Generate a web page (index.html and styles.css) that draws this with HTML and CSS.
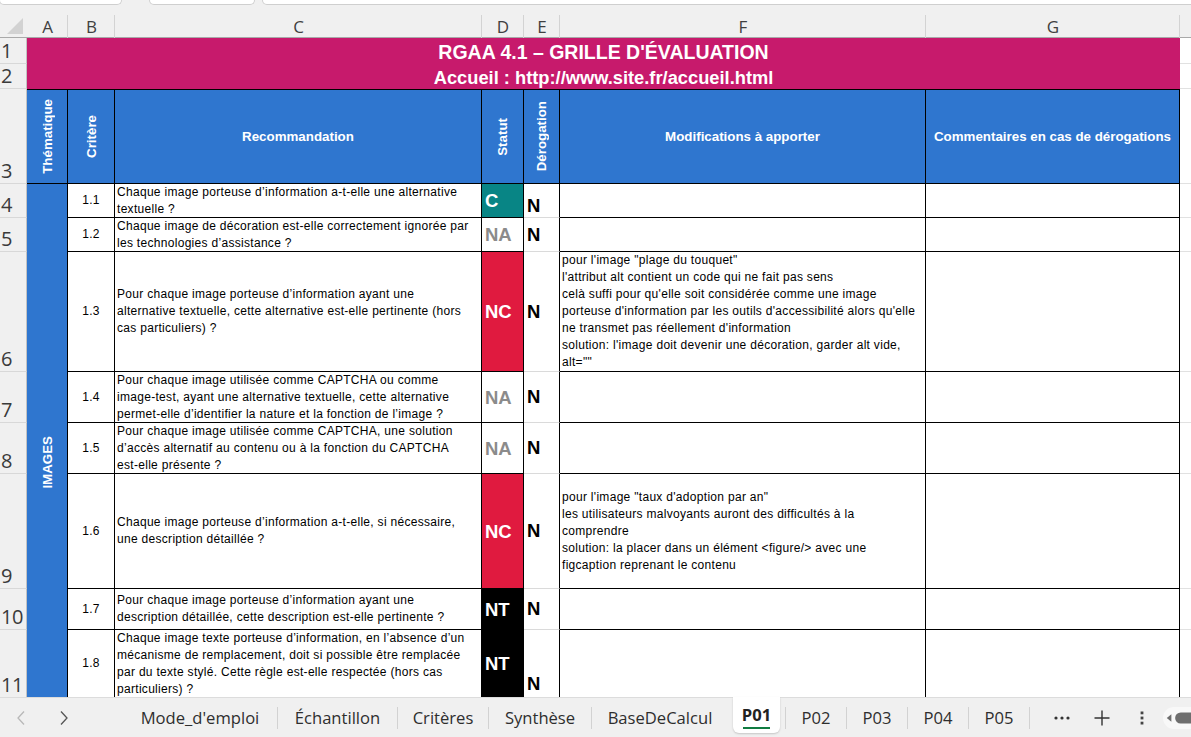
FILE: index.html
```html
<!DOCTYPE html>
<html lang="fr">
<head>
<meta charset="utf-8">
<title>RGAA 4.1 – Grille d'évaluation</title>
<link rel="stylesheet" href="styles.css">
</head>
<body>
<div class="topstrip">
  <div class="tb tb1"></div>
  <div class="tb tb2"></div>
  <div class="tb tb3"></div>
</div>
<div class="colhead">
  <div class="corner"><svg width="27" height="33" viewBox="0 0 27 33"><polygon points="23,13 23,29 7,29" fill="#d2d2d2"/></svg></div>
  <div class="ch">A</div>
  <div class="ch">B</div>
  <div class="ch">C</div>
  <div class="ch">D</div>
  <div class="ch">E</div>
  <div class="ch">F</div>
  <div class="ch">G</div>
  <div class="ch ch-end"></div>
</div>
<div class="sheet">
  <div class="title">
    <div class="t1">RGAA 4.1 – GRILLE D'ÉVALUATION</div>
    <div class="t2">Accueil : http://www.site.fr/accueil.html</div>
  </div>
  <div class="theme-cell"><span class="vtext">IMAGES</span></div>

  <div class="rh">1</div><div class="gap"></div>
  <div class="rh">2</div><div class="gap"></div>

  <div class="rh">3</div>
  <div class="th thA"><span class="vtext">Thématique</span></div>
  <div class="th"><span class="vtext">Critère</span></div>
  <div class="th">Recommandation</div>
  <div class="th"><span class="vtext">Statut</span></div>
  <div class="th"><span class="vtext">Dérogation</span></div>
  <div class="th">Modifications à apporter</div>
  <div class="th">Commentaires en cas de dérogations</div>
  <div class="gap"></div>

  <div class="rh">4</div>
  <div class="td num">1.1</div>
  <div class="td txt">Chaque image porteuse d’information a-t-elle une alternative<br>textuelle ?</div>
  <div class="td st st-c">C</div>
  <div class="td der der-low">N</div>
  <div class="td txt"></div>
  <div class="td"></div>
  <div class="gap"></div>

  <div class="rh">5</div>
  <div class="td num">1.2</div>
  <div class="td txt">Chaque image de décoration est-elle correctement ignorée par<br>les technologies d’assistance ?</div>
  <div class="td st st-na">NA</div>
  <div class="td der">N</div>
  <div class="td txt"></div>
  <div class="td"></div>
  <div class="gap"></div>

  <div class="rh">6</div>
  <div class="td num">1.3</div>
  <div class="td txt">Pour chaque image porteuse d’information ayant une<br>alternative textuelle, cette alternative est-elle pertinente (hors<br>cas particuliers) ?</div>
  <div class="td st st-nc">NC</div>
  <div class="td der">N</div>
  <div class="td txt">pour l'image "plage du touquet"<br>l'attribut alt contient un code qui ne fait pas sens<br>celà suffi pour qu'elle soit considérée comme une image<br>porteuse d'information par les outils d'accessibilité alors qu'elle<br>ne transmet pas réellement d'information<br>solution: l'image doit devenir une décoration, garder alt vide,<br>alt=""</div>
  <div class="td"></div>
  <div class="gap"></div>

  <div class="rh">7</div>
  <div class="td num">1.4</div>
  <div class="td txt">Pour chaque image utilisée comme CAPTCHA ou comme<br>image-test, ayant une alternative textuelle, cette alternative<br>permet-elle d’identifier la nature et la fonction de l’image ?</div>
  <div class="td st st-na">NA</div>
  <div class="td der">N</div>
  <div class="td txt"></div>
  <div class="td"></div>
  <div class="gap"></div>

  <div class="rh">8</div>
  <div class="td num">1.5</div>
  <div class="td txt">Pour chaque image utilisée comme CAPTCHA, une solution<br>d’accès alternatif au contenu ou à la fonction du CAPTCHA<br>est-elle présente ?</div>
  <div class="td st st-na">NA</div>
  <div class="td der">N</div>
  <div class="td txt"></div>
  <div class="td"></div>
  <div class="gap"></div>

  <div class="rh">9</div>
  <div class="td num">1.6</div>
  <div class="td txt">Chaque image porteuse d’information a-t-elle, si nécessaire,<br>une description détaillée ?</div>
  <div class="td st st-nc">NC</div>
  <div class="td der">N</div>
  <div class="td txt">pour l'image "taux d'adoption par an"<br>les utilisateurs malvoyants auront des difficultés à la<br>comprendre<br>solution: la placer dans un élément &lt;figure/&gt; avec une<br>figcaption reprenant le contenu</div>
  <div class="td"></div>
  <div class="gap"></div>

  <div class="rh">10</div>
  <div class="td num">1.7</div>
  <div class="td txt">Pour chaque image porteuse d’information ayant une<br>description détaillée, cette description est-elle pertinente ?</div>
  <div class="td st st-nt">NT</div>
  <div class="td der">N</div>
  <div class="td txt"></div>
  <div class="td"></div>
  <div class="gap"></div>

  <div class="rh">11</div>
  <div class="td num">1.8</div>
  <div class="td txt">Chaque image texte porteuse d’information, en l’absence d’un<br>mécanisme de remplacement, doit si possible être remplacée<br>par du texte stylé. Cette règle est-elle respectée (hors cas<br>particuliers) ?</div>
  <div class="td st st-nt">NT</div>
  <div class="td der der-bottom">N</div>
  <div class="td txt"></div>
  <div class="td"></div>
  <div class="gap"></div>
</div>
<div class="tabbar">
  <div class="nav">
    <svg class="chev" width="10" height="16" viewBox="0 0 10 16"><polyline points="8,1.5 2,8 8,14.5" fill="none" stroke="#b8b8b8" stroke-width="1.3"/></svg>
    <svg class="chev" width="10" height="16" viewBox="0 0 10 16"><polyline points="2,1.5 8,8 2,14.5" fill="none" stroke="#555" stroke-width="1.3"/></svg>
  </div>
  <div class="tabs">
    <span class="tab w-mode">Mode_d'emploi</span><span class="sep"></span>
    <span class="tab w-ech">Échantillon</span><span class="sep"></span>
    <span class="tab w-crit">Critères</span><span class="sep"></span>
    <span class="tab w-syn">Synthèse</span><span class="sep"></span>
    <span class="tab w-base">BaseDeCalcul</span>
    <span class="tab active">P01</span><span class="sep"></span>
    <span class="tab w-p">P02</span><span class="sep"></span>
    <span class="tab w-p">P03</span><span class="sep"></span>
    <span class="tab w-p">P04</span><span class="sep"></span>
    <span class="tab w-p">P05</span><span class="sep"></span>
  </div>
  <div class="tools">
    <span class="tool"><svg width="16" height="4" viewBox="0 0 16 4"><circle cx="2" cy="2" r="1.6" fill="#333"/><circle cx="8" cy="2" r="1.6" fill="#333"/><circle cx="14" cy="2" r="1.6" fill="#333"/></svg></span>
    <span class="tool"><svg width="16" height="16" viewBox="0 0 16 16"><path d="M8 0.5V15.5M0.5 8H15.5" stroke="#333" stroke-width="1.4"/></svg></span>
    <span class="tool"><svg width="4" height="14" viewBox="0 0 4 14"><rect x="0.6" y="0.5" width="2.8" height="2.8" fill="#444"/><rect x="0.6" y="5.6" width="2.8" height="2.8" fill="#444"/><rect x="0.6" y="10.7" width="2.8" height="2.8" fill="#444"/></svg></span>
    <span class="scroll"><svg width="30" height="18" viewBox="0 0 30 18"><polygon points="4,9 9,5 9,13" fill="#6e6e6e"/><rect x="13" y="3" width="30" height="12" rx="6" fill="#6e6e6e"/></svg></span>
  </div>
</div>
</body>
</html>
```

FILE: styles.css
```css
* { box-sizing: border-box; margin: 0; padding: 0; }
html, body { width: 1191px; height: 737px; overflow: hidden; }
body {
  background: #fff;
  font-family: "Liberation Sans", Arial, sans-serif;
  display: flex;
  flex-direction: column;
  --cols: 27px 41px 47px 367px 42px 36px 366px 254px 11px;
}

/* top strip */
.topstrip { height: 5px; flex: none; background: #f0f0f0; display: flex; }
.tb { height: 5px; background: #fff; border: 1px solid #cfcfcf; border-top: none; border-radius: 0 0 5px 5px; }
.tb1 { width: 123px; margin-left: -1px; }
.tb2 { width: 106px; margin-left: 27px; }
.tb3 { flex: 1; margin-left: 7px; margin-right: -6px; }

/* column header */
.colhead {
  height: 33px; flex: none;
  display: grid; grid-template-columns: var(--cols);
  background: #f0f0f0; border-bottom: 1px solid #a9a9a9;
}
.corner { display: flex; }
.ch {
  display: flex; align-items: center; justify-content: center;
  padding-top: 10px;
  font-family: "Open Sans", "Noto Sans", sans-serif; font-size: 17px; color: #404040;
  background: linear-gradient(#d3d3d3, #d3d3d3) no-repeat right bottom / 1px 23px;
}
.ch-end { background: none; }

/* sheet grid */
.sheet {
  flex: 1; overflow: hidden;
  display: grid;
  grid-template-columns: var(--cols);
  grid-template-rows: 26px 25px 95px 34px 34px 120px 51px 51px 115px 41px 68px;
  align-content: start;
  font-size: 12px; color: #000;
}
.rh {
  grid-column: 1;
  background: #f0f0f0;
  border-bottom: 1px solid #d8d8d8;
  border-right: 1px solid #c2c2c2;
  display: flex; align-items: flex-end;
  padding: 0 0 2px 1px;
  font-family: "Open Sans", "Noto Sans", sans-serif; font-size: 20px; line-height: 20px; color: #3a3a3a;
  letter-spacing: -0.5px;
}
.gap { grid-column: 9; border-bottom: 1px solid #e1e1e1; background: #fff; }

.title {
  grid-column: 2 / 9; grid-row: 1 / 3;
  background: #c71a6c; color: #fff; font-weight: bold;
  display: flex; flex-direction: column; align-items: center;
}
.t1 { height: 26px; line-height: 26px; font-size: 19.5px; padding-top: 1px; }
.t2 { height: 25px; line-height: 25px; font-size: 18.3px; padding-top: 1px; }

.th {
  background: #2f76cf; color: #fff; font-weight: bold; font-size: 13.33px;
  border-top: 1px solid #000; border-right: 1px solid #000; border-bottom: 1px solid #000;
  display: flex; align-items: center; justify-content: center; text-align: center;
}
.vtext { writing-mode: vertical-rl; transform: rotate(180deg); white-space: nowrap; }

.theme-cell {
  grid-column: 2; grid-row: 4 / 12;
  background: #2f76cf; color: #fff; font-weight: bold; font-size: 13.33px;
  border-right: 1px solid #000;
  display: flex; align-items: center; justify-content: center;
  padding-top: 42px;
}

.td {
  border-right: 1px solid #000; border-bottom: 1px solid #000;
  display: flex; align-items: center;
  line-height: 17px; letter-spacing: 0.3px;
}
.num { justify-content: center; letter-spacing: 0.2px; }
.txt { padding-left: 2px; white-space: nowrap; }
.st { font-size: 18.5px; font-weight: bold; padding-left: 3px; letter-spacing: 0; }
.st-c { background: #088585; color: #fff; }
.st-na { background: #fff; color: #8b8b8b; }
.st-nc { background: #e01a3f; color: #fff; }
.st-nt { background: #000; color: #fff; }
.der {
  font-size: 18.5px; font-weight: bold; padding-left: 3px; letter-spacing: 0;
  border-bottom-color: #dadada; line-height: 18px;
}
.der-low { align-items: flex-end; padding-bottom: 2px; }
.der-bottom { align-items: flex-end; padding-bottom: 4px; }

/* tab bar */
.tabbar {
  height: 40px; flex: none;
  background: #f0f0f0; border-top: 1px solid #dcdcdc;
  display: flex; align-items: stretch;
  font-family: "Open Sans", "Noto Sans", sans-serif; font-size: 16.6px; color: #2e2e2e;
}
.nav { width: 123px; flex: none; display: flex; align-items: center; padding-left: 16px; gap: 33px; }
.tabs { display: flex; align-items: center; flex: none; }
.tab { white-space: nowrap; line-height: 22px; text-align: center; flex: none; }
.w-mode { width: 154px; }
.w-ech { width: 119px; }
.w-crit { width: 90px; }
.w-syn { width: 102px; }
.w-base { width: 136px; }
.w-p { width: 60px; }
.sep { width: 1px; height: 22px; background: #d2d2d2; flex: none; }
.tab.active {
  align-self: stretch;
  width: 47px;
  margin: -1px 5px 4px 5px;
  background: #fff; border-radius: 0 0 6px 6px;
  box-shadow: 0 1px 2px rgba(0,0,0,0.18);
  font-weight: bold; color: #222;
  display: flex; align-items: center; justify-content: center;
  background-image: linear-gradient(#107c41, #107c41);
  background-repeat: no-repeat; background-size: 27px 2px; background-position: center 30px;
}
.tools { display: flex; align-items: center; padding-left: 12px; flex: 1; min-width: 0; }
.tool { width: 40px; flex: none; display: flex; justify-content: center; align-items: center; }
.scroll {
  margin-left: 1px; flex: 1; height: 22px;
  background: #f8f8f8; border-radius: 11px 0 0 11px;
  display: flex; align-items: center; overflow: hidden;
}
```
